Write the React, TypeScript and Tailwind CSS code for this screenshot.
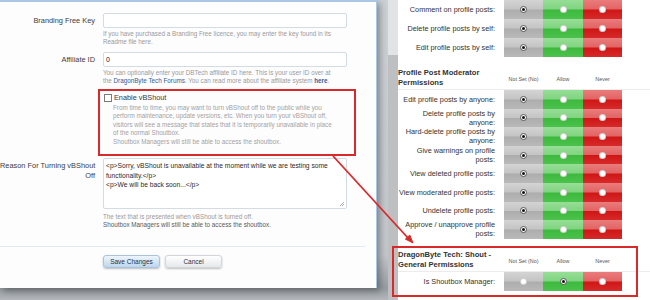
import React from "react"

type Choice = "none" | "allow" | "never"

interface PermProps {
  label: string
  value?: Choice
  h: string
  noneChecked?: boolean
}

const cellGray =
  "bg-[linear-gradient(to_bottom,#d4d4d4_0%,#c4c4c4_48%,#adadad_52%,#b9b9b9_100%)]"
const cellGreen =
  "bg-[linear-gradient(to_bottom,#97de97_0%,#80d480_48%,#3db93d_52%,#4cc24c_100%)]"
const cellRed =
  "bg-[linear-gradient(to_bottom,#ea7c7c_0%,#e26464_48%,#cf1616_52%,#d62a2a_100%)]"

const Radio = ({ checked }: { checked?: boolean }) =>
  checked ? (
    <span className="w-[7px] h-[7px] rounded-full bg-white border border-[#555] flex items-center justify-center">
      <span className="w-[3px] h-[3px] rounded-full bg-[#111]" />
    </span>
  ) : (
    <span className="w-[7px] h-[7px] rounded-full bg-white border border-[rgba(0,0,0,0.18)]" />
  )

const PermRow: React.FC<PermProps> = ({ label, value = "none", h }) => (
  <div className={`flex ${h}`}>
    <div className="w-[97px] shrink-0 flex items-center justify-end text-right whitespace-nowrap text-[7.3px] leading-[9px] text-[#333]">
      <span>
        {label.split("|").map((part, i) => (
          <React.Fragment key={i}>
            {i > 0 && <br />}
            {part}
          </React.Fragment>
        ))}
      </span>
    </div>
    <div className="ml-[9px] flex">
      <div className={`w-[39px] flex items-center justify-center ${cellGray}`}>
        <Radio checked={value === "none"} />
      </div>
      <div className={`w-[40px] flex items-center justify-center ${cellGreen}`}>
        <Radio checked={value === "allow"} />
      </div>
      <div className={`w-[39px] flex items-center justify-center ${cellRed}`}>
        <Radio checked={value === "never"} />
      </div>
    </div>
  </div>
)

const GroupHead = ({ lines }: { lines: string[] }) => (
  <div className="h-[33px] flex items-end border-b border-[#ececec]">
    <div className="w-[106px] shrink-0 h-[20px] mb-[1px] font-bold text-[7.6px] leading-[10px] text-[#333] whitespace-nowrap">
      {lines[0]}
      <br />
      {lines[1]}
    </div>
    <div className="flex h-[20px] mb-[1px] pt-[3px] items-center text-[5.4px] text-[#555]">
      <span className="w-[39px] text-center">Not Set (No)</span>
      <span className="w-[40px] text-center">Allow</span>
      <span className="w-[39px] text-center">Never</span>
    </div>
  </div>
)

const FormLabel = ({ children }: { children: React.ReactNode }) => (
  <div className="w-[95px] shrink-0 text-right whitespace-nowrap text-[7.4px] leading-[15px] text-[#3c3c3c]">
    {children}
  </div>
)

const Help = ({ children, className = "" }: { children: React.ReactNode; className?: string }) => (
  <div className={`text-[6.3px] leading-[8px] text-[#9a9a9a] whitespace-nowrap ${className}`}>
    {children}
  </div>
)

const group2 = [
  "Edit profile posts by anyone:",
  "Delete profile posts by|anyone:",
  "Hard-delete profile posts by|anyone:",
  "Give warnings on profile|posts:",
  "View deleted profile posts:",
  "View moderated profile posts:",
  "Undelete profile posts:",
  "Approve / unapprove profile|posts:",
]

export default function App() {
  return (
    <div className="w-[650px] h-[300px] relative overflow-hidden flex font-['Liberation_Sans',Arial,sans-serif]">
      {/* dimmed page behind the dialog */}
      <div className="w-[398px] h-full shrink-0 flex bg-[linear-gradient(to_bottom,#cdd1d5_0%,#c3c7cb_85%,#969ca2_96%,#b4b8bc_100%)]">
        <div className="w-[377px] h-[288px] shrink-0 bg-[#fdfdfe] border-t-2 border-r border-[#a9c6e4] shadow-[3px_3px_7px_rgba(0,0,0,0.35)] overflow-hidden">
          <div className="flex mt-[11px]">
            <FormLabel>Branding Free Key</FormLabel>
            <div className="ml-[8px] w-[244px]">
              <div className="h-[15px] bg-white border border-[#d3dbe3] rounded-[2px]" />
              <Help className="mt-[2px]">
                If you have purchased a Branding Free licence, you may enter the key found in its
                <br />
                Readme file here.
              </Help>
            </div>
          </div>

          <div className="flex mt-[6px]">
            <FormLabel>Affiliate ID</FormLabel>
            <div className="ml-[8px] w-[244px]">
              <div className="h-[15px] bg-white border border-[#d3dbe3] rounded-[2px] pl-[2px] text-[7px] leading-[13px] text-[#222]">
                0
              </div>
              <Help className="mt-[2px]">
                You can optionally enter your DBTech affiliate ID here. This is your user ID over at
                <br />
                the <span className="text-[#2f5d9a]">DragonByte Tech Forums</span>. You can read more about the affiliate system{" "}
                <span className="text-[#2f5d9a] font-bold">here</span>.
              </Help>
            </div>
          </div>

          <div className="flex mt-[4px]">
            <div className="w-[95px] shrink-0" />
            <div className="ml-[3px] w-[258px] h-[67px] border-2 border-[#d82a2a] pl-[4px] pt-[2px]">
              <div className="flex items-center h-[10px]">
                <span className="w-[8px] h-[8px] bg-white border border-[#7a7a7a]" />
                <span className="ml-[2px] text-[7.3px] text-[#3a3a3a]">Enable vBShout</span>
              </div>
              <div className="ml-[9px] mt-[1px] text-[6.3px] leading-[8.4px] text-[#a2a2a2] whitespace-nowrap">
                From time to time, you may want to turn vBShout off to the public while you
                <br />
                perform maintenance, update versions, etc. When you turn your vBShout off,
                <br />
                visitors will see a message that states that it is temporarily unavailable in place
                <br />
                of the normal Shoutbox.
                <br />
                Shoutbox Managers will still be able to access the shoutbox.
              </div>
            </div>
          </div>

          <div className="flex mt-[2px]">
            <div className="w-[95px] shrink-0 pt-[3px] text-right whitespace-nowrap text-[7.4px] leading-[9.5px] text-[#3c3c3c]">
              Reason For Turning vBShout
              <br />
              Off
            </div>
            <div className="ml-[8px] w-[244px]">
              <div className="relative h-[51px] bg-white border border-[#d3dbe3] rounded-[2px] pl-[2px] pt-[2px] text-[6.7px] leading-[9.6px] text-[#2a2a2a] whitespace-nowrap">
                &lt;p&gt;Sorry, vBShout is unavailable at the moment while we are testing some
                <br />
                functionality.&lt;/p&gt;
                <br />
                &lt;p&gt;We will be back soon...&lt;/p&gt;
                <svg className="absolute right-[1px] bottom-[1px]" width="6" height="6" viewBox="0 0 6 6">
                  <path d="M5 1 L1 5 M5 3 L3 5" stroke="#9a9a9a" strokeWidth="0.8" />
                </svg>
              </div>
              <Help className="mt-[4px]">
                The text that is presented when vBShout is turned off.
                <br />
                <span className="text-[#5a5a5a]">Shoutbox Managers will still be able to access the shoutbox.</span>
              </Help>
            </div>
          </div>

          <div className="mt-[17px] w-[365px] h-px bg-[#e1e9f1]" />

          <div className="flex gap-[5px] ml-[103px] mt-[8px]">
            <button className="w-[57px] h-[13px] rounded-[3px] border border-[#a9c3db] bg-[linear-gradient(to_bottom,#eef5fc,#bcd6ee)] text-[6.5px] text-[#233447] shadow-[0_1px_2px_rgba(0,0,0,0.25)]">
              Save Changes
            </button>
            <button className="w-[57px] h-[13px] rounded-[3px] border border-[#d2d6da] bg-[linear-gradient(to_bottom,#ffffff,#e6e8ea)] text-[6.5px] text-[#233447] shadow-[0_1px_2px_rgba(0,0,0,0.25)]">
              Cancel
            </button>
          </div>
        </div>
        <div className="flex-1 flex justify-end">
          <div className="w-[10px] h-full flex flex-col">
            <div className="h-[55px] bg-[#e2e3e4]" />
            <div className="flex-1 bg-[#bdbfc1]" />
          </div>
        </div>
      </div>

      {/* permissions list */}
      <div className="flex-1 bg-white overflow-hidden">
        <PermRow label="Comment on profile posts:" h="h-[19px]" />
        <PermRow label="Delete profile posts by self:" h="h-[19px]" />
        <PermRow label="Edit profile posts by self:" h="h-[19px]" />
        <GroupHead lines={["Profile Post Moderator", "Permissions"]} />
        {group2.map((label) => (
          <PermRow key={label} label={label} h="h-[18.6px]" />
        ))}
        <GroupHead lines={["DragonByte Tech: Shout -", "General Permissions"]} />
        <PermRow label="Is Shoutbox Manager:" value="allow" h="h-[19px]" />
      </div>

      {/* annotation */}
      <div className="absolute left-[392px] top-[246px] w-[246px] h-[51px] border-2 border-[#d82a2a]" />
      <svg className="absolute left-0 top-0 pointer-events-none" width="650" height="300" viewBox="0 0 650 300">
        <line x1="333" y1="156" x2="408" y2="238" stroke="#d82a2a" strokeWidth="1.8" />
        <polygon points="413,243 405.4,239.1 409.8,235.1" fill="#d82a2a" stroke="#d82a2a" strokeWidth="1" />
      </svg>
    </div>
  )
}
